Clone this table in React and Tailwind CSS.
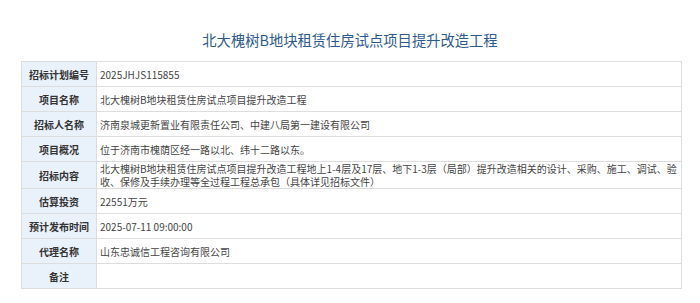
import React from 'react';

const rows = [
    { label: '招标计划编号', value: '2025JHJS115855' },
    { label: '项目名称', value: '北大槐树B地块租赁住房试点项目提升改造工程' },
    { label: '招标人名称', value: '济南泉城更新置业有限责任公司、中建八局第一建设有限公司' },
    { label: '项目概况', value: '位于济南市槐荫区经一路以北、纬十二路以东。' },
    {
        label: '招标内容',
        value: '北大槐树B地块租赁住房试点项目提升改造工程地上1-4层及17层、地下1-3层（局部）提升改造相关的设计、采购、施工、调试、验收、保修及手续办理等全过程工程总承包（具体详见招标文件）',
    },
    { label: '估算投资', value: '22551万元' },
    { label: '预计发布时间', value: '2025-07-11 09:00:00' },
    { label: '代理名称', value: '山东忠诚信工程咨询有限公司' },
    { label: '备注', value: '' },
];

function App() {
    return (
        <div className="w-[700px] h-[303px] bg-white font-['Microsoft_YaHei','Noto_Sans_CJK_SC',sans-serif] text-[#333]">
            <h1 className="pt-[31px] mb-[12px] text-center text-[14.3px] leading-[18px] text-[#2d5a8c] font-normal">
                北大槐树B地块租赁住房试点项目提升改造工程
            </h1>
            <div className="ml-[21px] w-[661px] border border-[#dddddd]">
                {rows.map((row, i) => (
                    <div key={row.label} className={`flex ${i > 0 ? 'border-t border-[#dddddd]' : ''}`}>
                        <div className="w-[75px] shrink-0 bg-[#e9f1fa] border-r border-[#dddddd] flex items-center justify-center text-[10px] font-bold leading-[13px]">
                            {row.label}
                        </div>
                        <div className="flex-1 min-h-[24px] pl-[3px] pr-[3px] flex items-center text-[10px] leading-[13px] text-[#444]">
                            {row.value}
                        </div>
                    </div>
                ))}
            </div>
        </div>
    );
}

export default App;
